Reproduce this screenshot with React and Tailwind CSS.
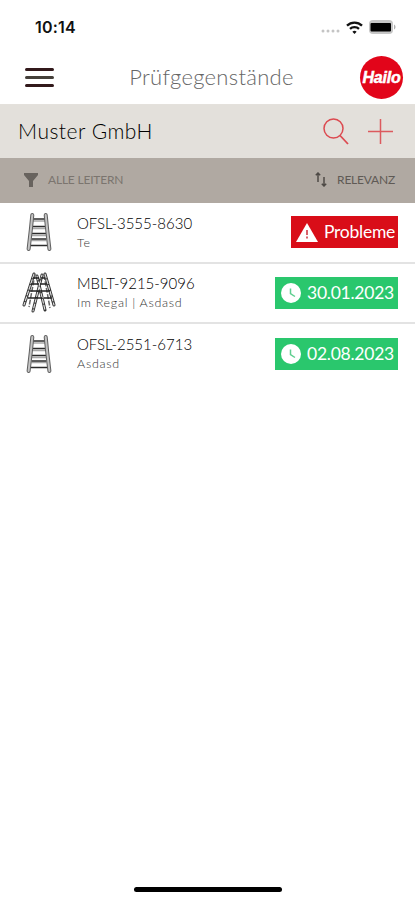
const items = [
  { id: 'OFSL-3555-8630', info: 'Te', type: 'single', status: 'problem', label: 'Probleme' },
  { id: 'MBLT-9215-9096', info: 'Im Regal | Asdasd', type: 'double', status: 'ok', label: '30.01.2023' },
  { id: 'OFSL-2551-6713', info: 'Asdasd', type: 'single', status: 'ok', label: '02.08.2023' },
];

function LadderIcon() {
  return (
    <svg width="26" height="40" viewBox="0 0 26 40" fill="none">
      <path d="M7 9h12M6.5 16.5h13M6 23.5h14M5.5 28.5h15" stroke="#a8a8a8" strokeWidth="1.4" />
      <path d="M7 7h12M6.5 14.5h13M6 21.5h14M5.5 27h15M5 33.5h16" stroke="#2c2c2c" strokeWidth="1.7" />
      <path d="M6.3 3 4.8 18 2.6 37M19.700 3 21.200 18 23.400 37" stroke="#606060" strokeWidth="4" strokeLinecap="round" />
      <path d="M6.3 3 4.8 18 2.6 37M19.700 3 21.200 18 23.400 37" stroke="#c4c4c4" strokeWidth="2" strokeLinecap="round" />
    </svg>
  );
}

function DoubleLadderIcon() {
  return (
    <svg width="34" height="44" viewBox="0 0 34 44" fill="none">
      <g stroke="#333" strokeWidth="3" strokeLinecap="round">
        <path d="M12 3 2 34M15 5 23 39M20 4 11 40M23 3 32 34" />
      </g>
      <g stroke="#ddd" strokeWidth="1.2" strokeLinecap="round" strokeDasharray="4 2">
        <path d="M12 3 2 34M15 5 23 39M20 4 11 40M23 3 32 34" />
      </g>
      <path d="M13 3 7 36M22 4 28 37" stroke="#666" strokeWidth="1.5" strokeDasharray="5 1.5" />
      <path d="M11 7h6M9 13h8M8 20h8M6 27h8M19 7h4M18 13h7M14 20h14M12 27h8M22 27h8" stroke="#222" strokeWidth="1.6" />
    </svg>
  );
}

function WarningIcon() {
  return (
    <svg width="22" height="19" viewBox="0 0 22 19">
      <path d="M11 0 22 19H0Z" fill="#fff" />
      <path d="M10 7h2v5h-2zM10 13.6h2v2h-2z" fill="#d8606a" />
    </svg>
  );
}

function ClockIcon() {
  return (
    <svg width="20" height="20" viewBox="0 0 20 20" fill="none">
      <circle cx="10" cy="10" r="10" fill="#fff" />
      <path d="M9.5 5.5v5l4.5 3" stroke="#5fcf90" strokeWidth="1.5" />
    </svg>
  );
}

function StatusBar() {
  return (
    <div className="flex h-[52px] items-center justify-between pl-[35px] pr-[19px] pt-[2px]">
      <span className="font-['Inter',sans-serif] text-[16px] font-semibold leading-5 tracking-[0.2px] text-[#111]">10:14</span>
      <div className="flex items-center">
        <svg className="mr-[6px] mt-[7px]" width="19" height="4" viewBox="0 0 19 4" fill="#c4c4c4">
          <circle cx="2" cy="2" r="1.5" />
          <circle cx="7" cy="2" r="1.5" />
          <circle cx="12" cy="2" r="1.5" />
          <circle cx="17" cy="2" r="1.5" />
        </svg>
        <svg className="mr-[6px]" width="17" height="13" viewBox="0 0 17 13" fill="none" stroke="#111" strokeWidth="2.3">
          <path d="M1 4.7a10.8 10.8 0 0 1 15 0" />
          <path d="M4 7.9a6.5 6.5 0 0 1 9 0" />
          <path d="m8.5 13-2.1-2.3a3 3 0 0 1 4.2 0Z" fill="#111" stroke="none" />
        </svg>
        <svg width="27" height="14" viewBox="0 0 27 14">
          <rect width="24" height="14" rx="4" fill="#c6c6c6" />
          <rect x="1.5" y="3" width="20.5" height="8.5" rx="1" fill="#000" />
          <path d="M25 4.5c2 .8 2 4.2 0 5z" fill="#b0b0b0" />
        </svg>
      </div>
    </div>
  );
}

function Header() {
  return (
    <header className="flex h-[53px] items-center justify-between border-b border-[#e4e1dc] pb-[2px] pl-[25px] pr-[12px]">
      <button className="flex w-[29px] flex-col gap-[5px]" aria-label="Menu">
        <span className="h-[3px] rounded-sm bg-[#32191b]" />
        <span className="h-[3px] rounded-sm bg-[#45403a]" />
        <span className="h-[3px] rounded-sm bg-[#32191b]" />
      </button>
      <h1 className="ml-[9px] whitespace-nowrap text-[22px] font-light leading-[26px] tracking-[0.3px] text-[#666]">Prüfgegenstände</h1>
      <div className="flex h-[43px] w-[43px] items-center justify-center rounded-full bg-[#e2051a]">
        <span className="pt-px font-['Liberation_Sans',sans-serif] text-[16px] font-black italic tracking-[-0.2px] text-white [-webkit-text-stroke:0.5px_white]">
          Hailo
        </span>
      </div>
    </header>
  );
}

function ItemRow({ item }) {
  const isProblem = item.status === 'problem';
  return (
    <li className="flex h-[60.5px] items-center border-b-2 border-[#e3e3e3] pr-[17px] last:border-transparent last:pt-[1px]">
      <div className="flex w-[77px] justify-center">
        {item.type === 'double' ? <DoubleLadderIcon /> : <LadderIcon />}
      </div>
      <div className="flex-1 pt-px">
        <p className="text-[15px] font-light leading-5 text-black">{item.id}</p>
        <p className="text-[12.5px] font-light leading-5 tracking-[0.7px] text-[#333]">{item.info}</p>
      </div>
      <div
        className={`flex h-8 items-center gap-[6px] text-[17.5px] tracking-[-0.25px] text-white ${
          isProblem ? 'w-[107px] bg-[#d90d18] pl-[5px]' : 'w-[123px] bg-[#2ac76d] pl-[6px]'
        }`}
      >
        {isProblem ? <WarningIcon /> : <ClockIcon />}
        <span className="whitespace-nowrap">{item.label}</span>
      </div>
    </li>
  );
}

export default function App() {
  return (
    <div className="flex h-[900px] w-full flex-col overflow-hidden bg-white font-['Lato',sans-serif]">
      <StatusBar />
      <Header />
      <div className="flex h-[53px] items-center justify-between bg-[#e3e0db] pl-[18px] pr-[22px]">
        <h2 className="pb-[2px] text-[21px] font-light tracking-[0.5px] text-black">Muster GmbH</h2>
        <div className="flex items-center gap-[19px]">
          <svg width="26" height="27" viewBox="0 0 26 27" fill="none" stroke="#dc4a50" strokeWidth="1.5">
            <circle cx="10.5" cy="10.5" r="9.5" />
            <path d="m17 17.5 8 8.5" strokeWidth="1.8" />
          </svg>
          <svg width="25" height="25" viewBox="0 0 25 25" fill="none" stroke="#dc5a5e" strokeWidth="1.5">
            <path d="M12.5 0v25M0 12.5h25" />
          </svg>
        </div>
      </div>
      <div className="flex h-[45px] items-center justify-between bg-[#b0a9a2] pb-[2px] pl-[24px] pr-[20px] text-[12px]">
        <div className="flex items-center gap-[10px] tracking-[-0.2px] text-[#7b756f]">
          <svg width="14" height="14" viewBox="0 0 14 14" fill="#68635e">
            <path d="M0 0h14v2L9 8v6H5V8L0 2z" />
          </svg>
          <span>ALLE LEITERN</span>
        </div>
        <div className="flex items-center gap-[10px] tracking-[-0.2px] text-[#5f5a55]">
          <svg width="12" height="15" viewBox="0 0 12 15" fill="none" stroke="#4e4a46" strokeWidth="1.5">
            <path d="M3 10V1M.8 3.2 3 1l2.2 2.2M9 5v9M6.8 11.8 9 14l2.2-2.2" />
          </svg>
          <span>RELEVANZ</span>
        </div>
      </div>
      <ul>
        {items.map((item) => (
          <ItemRow key={item.id} item={item} />
        ))}
      </ul>
      <div className="mx-auto mb-[8px] mt-auto h-[5px] w-[148px] rounded-full bg-black" />
    </div>
  );
}
